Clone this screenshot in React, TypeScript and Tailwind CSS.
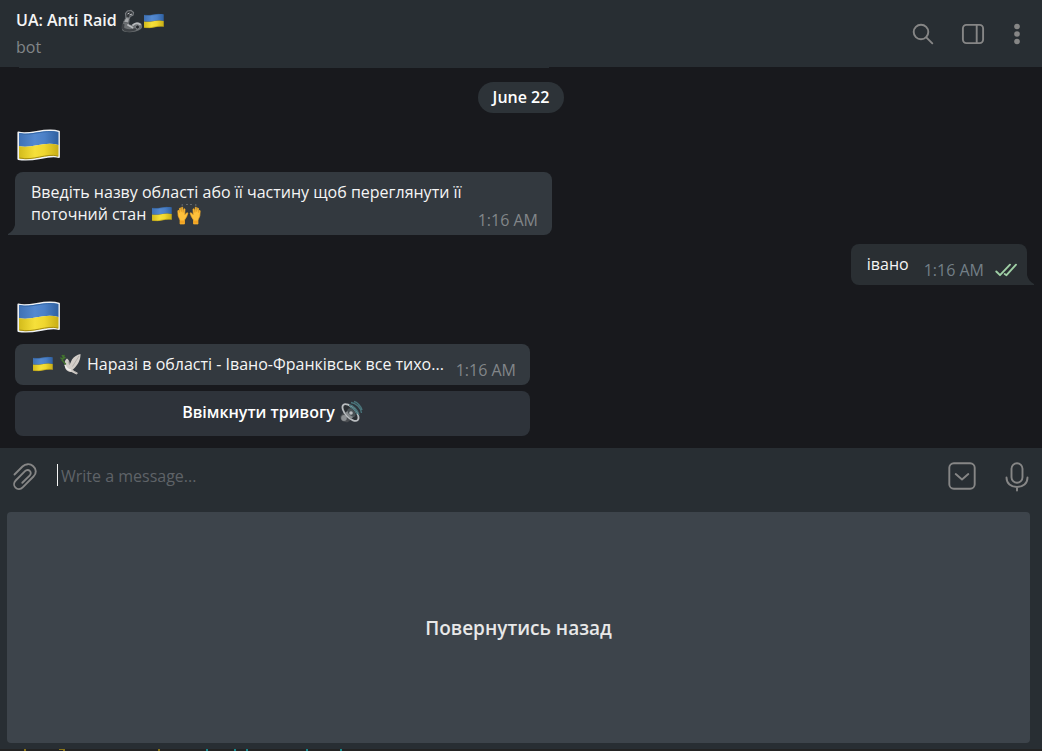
import type { ReactNode } from "react";

type IconProps = { className?: string };

function Flag({ className = "h-4 w-[22px]", sticker = false }: { className?: string; sticker?: boolean }) {
  const id = sticker ? "flag-large" : "flag-small";
  return (
    <svg viewBox="0 0 44 32" className={`inline-block shrink-0 ${className}`} role="img" aria-label="🇺🇦">
      <defs>
        <linearGradient id={`${id}-b`} x1="0" x2="1">
          <stop offset="0" stopColor="#3f71b4" />
          <stop offset=".4" stopColor="#5489cf" />
          <stop offset=".65" stopColor="#4b80c7" />
          <stop offset="1" stopColor="#2f60a0" />
        </linearGradient>
        <linearGradient id={`${id}-y`} x1="0" x2="1">
          <stop offset="0" stopColor="#d3bb1b" />
          <stop offset=".4" stopColor="#f6e03a" />
          <stop offset=".65" stopColor="#efd62e" />
          <stop offset="1" stopColor="#c7ad16" />
        </linearGradient>
      </defs>
      {sticker && (
        <path d="M1.300 3.500C14 6.500 27-1.500 42 2.500V28C29 25 17 33.500 1.300 30Z" fill="#eef1f4" stroke="#eef1f4" strokeWidth="1.800" strokeLinejoin="round" />
      )}
      <path d="M2 4C14 7 27-.5 41.500 3V16C27 12 14 20 2 17Z" fill={`url(#${id}-b)`} />
      <path d="M2 17C14 20 27 12 41.500 16V27.500C29 24.500 17 32.500 2 29.500Z" fill={`url(#${id}-y)`} />
      <path d="M2.500 29C17 32 29 24 41 27" fill="none" stroke="#a58d13" strokeWidth="1" />
      <path d="M2.500 4.500C14 7.500 27 0 41 3.500" fill="none" stroke="#3468a8" strokeWidth="1" />
    </svg>
  );
}

function MechanicalArm() {
  return (
    <svg viewBox="0 0 22 24" className="h-6 w-[22px] shrink-0" role="img" aria-label="🦾">
      <path d="M2.500 12.500L1 17C.5 20 1 22 3 22.500C8 24 15 23.500 20 20C21.800 18.500 21.500 15.500 19.500 14C16 12.500 13 13.500 11.500 16L8 15.500L8.500 11Z" fill="#6c7073" />
      <path d="M2.500 15C1.500 18 2 20 3.500 20.500C7 22 12 21.500 15 20" fill="none" stroke="#3e4246" strokeWidth="2.500" />
      <path d="M12 16C14 14.500 17 14 19 15.500M7 16L11.500 18.500" stroke="#b8bbbe" strokeWidth="1.800" fill="none" strokeLinecap="round" />
      <circle cx="16.500" cy="18" r="2" fill="#24282c" stroke="#85898d" strokeWidth=".8" />
      <path d="M2.500 13L5.500 7.500L8.500 9L7.500 14Z" fill="#a5a8ab" stroke="#56595d" strokeWidth=".8" />
      <path d="M5 8.500L4.500 4.500L6.500 2L10 1.500L12.500 3.500L12 6L9 7.500L8.500 9Z" fill="#35393d" stroke="#777b7f" strokeWidth="1.200" />
      <path d="M6.500 5L8.500 4M8.500 6L11 5" stroke="#bfc2c5" strokeWidth="1" />
    </svg>
  );
}

function RaisedHands() {
  return (
    <svg viewBox="0 0 24 22" className="inline-block h-[22px] w-6" role="img" aria-label="🙌">
      <path d="M5.500 2.500L5 1.500M10 2V1M14 2V1M18.500 2.500L19 1.500" stroke="#777b7f" strokeWidth="1.400" />
      <g id="raised-hand">
        <path d="M3 21V17L1.200 13L.8 8L1.500 7L2.600 10L2.400 5.500L3.400 4.800L4.300 9L4.700 4.200L5.700 4.200L6 9.500L7 5.800L8 6L7.700 12L9.800 9.800L10.900 10L9.700 13.500L7.500 17V21Z" fill="#fdc13c" stroke="#f5ac27" strokeWidth=".7" strokeLinejoin="round" />
        <path d="M3 17.500H7.500V20.500H3Z" fill="#f2a323" />
      </g>
      <use href="#raised-hand" transform="translate(24 0) scale(-1 1)" />
    </svg>
  );
}

function Dove() {
  return (
    <svg viewBox="0 0 22 22" className="inline-block h-[22px] w-[22px]" role="img" aria-label="🕊️">
      <path d="M9.500 12L12 6.500C14 3.500 17 2 20.500 1C20.700 6 18.500 11 15 14.500L12.500 17L18 20L16.500 21.500L11.500 19C7.500 19 5 16.500 5 13C4.500 10 4.500 7 7 5.500C9 7 10 9 9.500 12Z" fill="#d3cec9" />
      <path d="M12.500 13.500L19 3M9.500 12L8 8M12.500 17L17 20.500" stroke="#aaa6a2" strokeWidth=".8" fill="none" />
      <path d="M5 12C6 15 8 17 11 17" stroke="#f0eeeb" strokeWidth="1.500" fill="none" />
      <path d="M5.500 11L2 7M2.500 7L4 2.500M2.500 6L.8 5M3 5.500L5 4.500M3.500 4L2.300 2.500" stroke="#43752e" strokeWidth="1.400" fill="none" strokeLinecap="round" />
    </svg>
  );
}

function Speaker() {
  return (
    <svg viewBox="0 0 24 24" className="h-6 w-6 shrink-0" role="img" aria-label="🔊">
      <path d="M1.500 16L3.500 13.500L8 12L13 19L9 22C5 23 .5 20 1.500 16Z" fill="#4a4d51" />
      <ellipse cx="5" cy="18" rx="2.800" ry="3" fill="#8b8e91" />
      <ellipse cx="11.500" cy="12.500" rx="5" ry="10.500" transform="rotate(-43 11.500 12.500)" fill="#2b2f33" stroke="#b9bcbf" strokeWidth="1.800" />
      <path d="M6 13L10 9.500L16 15.500L12 19Z" fill="#85898c" />
      <ellipse cx="12.500" cy="12.500" rx="3" ry="5" transform="rotate(-43 12.500 12.500)" fill="#4a5155" />
      <circle cx="12" cy="13" r="1.800" fill="#b9bcbf" />
      <path d="M10 5C14 5 19 10 20 15M12 2.500C17 3 22 8 22.500 13M15 1.500C18 2 22 6 23 10M11 7C14 8 17 11 18 14" fill="none" stroke="#4a757b" strokeWidth="1.400" />
    </svg>
  );
}

function SearchIcon({ className }: IconProps) {
  return (
    <svg viewBox="0 0 22 22" className={className} fill="none" stroke="currentColor" strokeWidth="1.900" strokeLinecap="round">
      <circle cx="9" cy="9" r="7.300" />
      <path d="M14.300 14.300L20.300 20.300" />
    </svg>
  );
}

function PanelIcon({ className }: IconProps) {
  return (
    <svg viewBox="0 0 24 22" className={className} fill="none" stroke="currentColor" strokeWidth="1.900">
      <rect x="1.900" y="1.900" width="20.200" height="18.200" rx="3.500" />
      <path d="M15.700 2V20" />
    </svg>
  );
}

function DotsIcon({ className }: IconProps) {
  return (
    <svg viewBox="0 0 6 22" className={className} fill="currentColor">
      <circle cx="3" cy="3.500" r="2.800" />
      <circle cx="3" cy="11" r="2.800" />
      <circle cx="3" cy="18.500" r="2.800" />
    </svg>
  );
}

function ClipIcon({ className }: IconProps) {
  return (
    <svg viewBox="0 0 24 28" className={className} fill="none" stroke="currentColor" strokeWidth="1.900" strokeLinecap="round">
      <path d="M1.500 11.500L9.500 3.500C12.500.7 17 .3 20 3C23.500 6 23.700 10.500 20.500 13.500L9.700 24.300C7.500 26.700 4.500 26.700 2.500 24.700C.5 22.700 .8 19.500 2.700 17.500L12 8.200C13.500 6.700 15.500 6.600 16.800 7.900C18.200 9.200 18 11.200 16.600 12.600L9.300 19.800" />
    </svg>
  );
}

function KeyboardToggleIcon({ className }: IconProps) {
  return (
    <svg viewBox="0 0 28 28" className={className} fill="none" stroke="currentColor" strokeWidth="1.900" strokeLinecap="round" strokeLinejoin="round">
      <rect x="1.300" y="1.300" width="25.400" height="25.400" rx="4.500" />
      <path d="M7.700 12L14 17.500L20.300 12" />
    </svg>
  );
}

function MicIcon({ className }: IconProps) {
  return (
    <svg viewBox="0 0 24 30" className={className} fill="none" stroke="currentColor" strokeWidth="1.900" strokeLinecap="round">
      <rect x="6.500" y="1.300" width="11" height="19.400" rx="5.500" />
      <path d="M1.500 15.500C1.500 21.500 6 25 12 25C18 25 22.500 21.500 22.500 15.500M12 25V28.500" />
    </svg>
  );
}

function ReadIcon() {
  return (
    <svg viewBox="0 0 22 14" className="h-3.5 w-[22px]" fill="none" stroke="#9fcfa5" strokeWidth="1.900" strokeLinecap="round" strokeLinejoin="round" role="img" aria-label="Read">
      <path d="M1.300 8.500L5 12.200L15 1.700M9.700 11L11.500 12.200L21 1.700" />
    </svg>
  );
}

function IncomingMessage({ children, tail = false, className }: { children: ReactNode; tail?: boolean; className: string }) {
  return (
    <div className={`relative flex max-w-full items-end justify-between rounded-lg bg-[#33393f] pl-4 pr-3.5 ${tail ? "rounded-bl-none" : ""} ${className}`}>
      <p className="pt-[9px] pb-2.5">{children}</p>
      <time className="shrink-0 pb-1 text-[#828689]">1:16 AM</time>
      {tail && (
        <svg viewBox="0 0 7 10" className="absolute -left-[7px] bottom-0 h-2.5 w-[7px]" aria-hidden="true">
          <path d="M7 0C6 4 4 7 0 9V10H7Z" fill="#33393f" />
        </svg>
      )}
    </div>
  );
}

export default function App() {
  return (
    <div className="flex min-h-screen flex-col bg-[#282e33] font-['Open_Sans','Noto_Sans',sans-serif] text-base leading-[22px] text-[#f5f5f5]">
      <header className="flex h-[67px] shrink-0 items-center justify-between pl-4 pr-[22px]">
        <div>
          <h1 className="flex h-[26px] items-start font-semibold">
            <span className="mr-1">UA: Anti Raid</span>
            <MechanicalArm />
            <Flag className="mt-1 h-4 w-[22px]" />
          </h1>
          <p className="h-6 leading-6 text-[#828689]">bot</p>
        </div>
        <div className="flex items-center text-[#868686]">
          <button aria-label="Search" className="mr-[27px]"><SearchIcon className="size-[22px]" /></button>
          <button aria-label="Info panel" className="mr-[29px]"><PanelIcon className="h-[22px] w-6" /></button>
          <button aria-label="Menu"><DotsIcon className="h-[22px] w-1.5" /></button>
        </div>
      </header>

      <main className="flex flex-1 flex-col items-start bg-[#18191d] px-[15px] pb-3">
        <div className="ml-1 h-px w-[530px] bg-[#282e33]" />
        <div className="mt-3.5 flex h-[31px] items-center self-center rounded-full bg-[#2d3338] px-[15px] pb-px font-semibold text-white">
          June 22
        </div>
        <Flag sticker className="mt-4 ml-0.5 h-8 w-11" />
        <IncomingMessage tail className="mt-[11px] w-[537px]">
          <span className="block max-w-[436px]">
            Введіть назву області або її частину щоб переглянути її поточний стан{" "}
            <span className="inline-flex h-[22px] items-center gap-1 pl-px align-bottom"><Flag /><RaisedHands /></span>
          </span>
        </IncomingMessage>
        <div className="relative mt-[9px] flex items-end self-end rounded-lg rounded-br-none bg-[#2a2f33] pl-4 pr-2.5">
          <p className="pt-[9px] pb-2.5">івано</p>
          <time className="ml-[15px] pb-1 text-[#737f87]">1:16 AM</time>
          <span className="ml-[11px] pb-2"><ReadIcon /></span>
          <svg viewBox="0 0 7 10" className="absolute -right-[7px] bottom-0 h-2.5 w-[7px]" aria-hidden="true">
            <path d="M0 0C1 4 3 7 7 9V10H0Z" fill="#2a2f33" />
          </svg>
        </div>
        <Flag sticker className="mt-4 ml-0.5 h-8 w-11" />
        <IncomingMessage className="mt-[11px] w-[515px]">
          <span className="flex items-center">
            <Flag className="ml-px h-4 w-[22px]" />
            <span className="mr-[5px] ml-1.5 flex"><Dove /></span>
            Наразі в області - Івано-Франківськ все тихо...
          </span>
        </IncomingMessage>
        <button className="mt-1.5 flex h-[45px] w-[515px] max-w-full items-center justify-center gap-1 rounded-lg bg-[#2e333a] pb-1 font-semibold text-white">
          Ввімкнути тривогу
          <Speaker />
        </button>
      </main>

      <form className="flex h-16 shrink-0 items-start pt-3.5 pr-[13px] pl-[13px] text-[#868686]" onSubmit={(e) => e.preventDefault()}>
        <button type="button" aria-label="Attach" className="pt-px"><ClipIcon className="h-7 w-6" /></button>
        <span className="mt-0.5 ml-5 h-[22px] w-px bg-[#f5f5f5]" aria-hidden="true" />
        <input aria-label="Message" placeholder="Write a message..." className="ml-[3px] h-7 min-w-0 flex-1 bg-transparent text-white outline-none placeholder:text-[#5f6368]" />
        <button type="button" aria-label="Hide bot keyboard" className="mr-[29px]"><KeyboardToggleIcon className="size-7" /></button>
        <button type="button" aria-label="Record voice message"><MicIcon className="h-[30px] w-6" /></button>
      </form>
      <div className="flex shrink-0 pr-3 pb-1.5 pl-[7px]">
        <button className="h-[231px] flex-1 rounded bg-[#3d444b] text-[19px] font-semibold text-[#e8e8e8]">Повернутись назад</button>
      </div>
      <svg viewBox="0 0 1042 2" preserveAspectRatio="xMinYMin slice" className="h-0.5 w-full shrink-0 bg-[#232323]" aria-hidden="true">
        <path d="M24 0h2v2h-2zM59 0h6v2h-2v-1h-4zM158 0h2v2h-2z" fill="#8a7518" />
        <path d="M206 0h2v2h-2zM234 0h2v2h-2zM246 0h2v2h-2zM306 0h2v2h-2zM340 0h2v2h-2z" fill="#188a8e" />
      </svg>
    </div>
  );
}
